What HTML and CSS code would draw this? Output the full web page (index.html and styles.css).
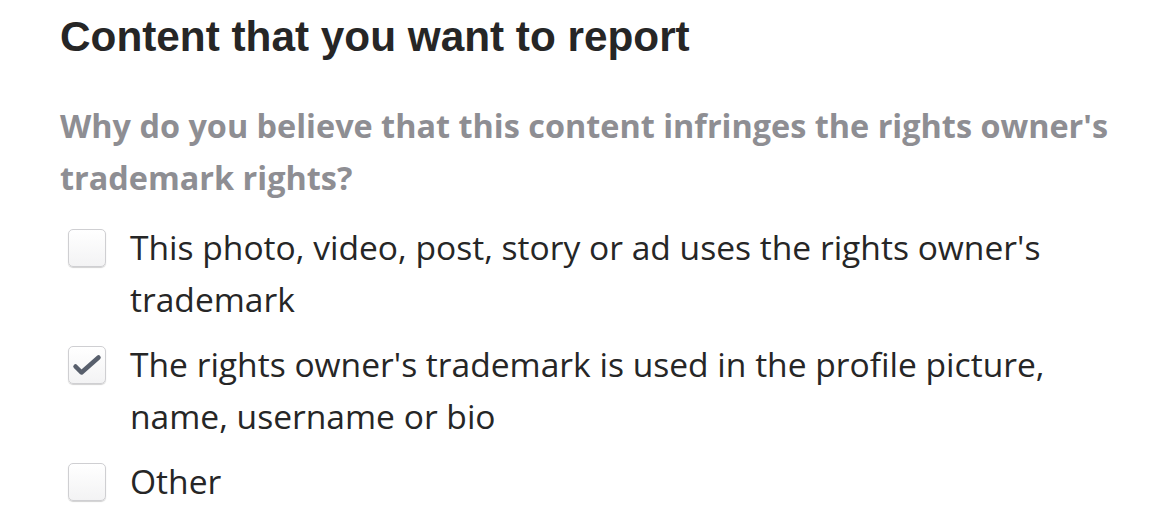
FILE: index.html
```html
<!DOCTYPE html>
<html lang="en">
<head>
    <meta charset="UTF-8">
    <meta name="viewport" content="width=device-width, initial-scale=1.0">
    <title>Report content</title>
    <link rel="stylesheet" href="styles.css">
</head>
<body>

    <div class="container">
        <h2>Content that you want to report</h2>
        <p class="question">Why do you believe that this content infringes the rights owner's trademark rights?</p>

        <ul class="options">
            <li class="option">
                <span class="box"></span>
                <span class="label">This photo, video, post, story or ad uses the rights owner's trademark</span>
            </li>
            <li class="option">
                <span class="box">
                    <svg width="38" height="38" viewBox="0 0 38 38">
                        <path d="M7.5 20.5 L13.5 26.5 L30.5 11.5" fill="none" stroke="#585f6c" stroke-width="4.5" stroke-linecap="round" stroke-linejoin="round"/>
                    </svg>
                </span>
                <span class="label">The rights owner's trademark is used in the profile picture, name, username or bio</span>
            </li>
            <li class="option">
                <span class="box"></span>
                <span class="label">Other</span>
            </li>
        </ul>
    </div>

</body>
</html>
```
FILE: styles.css
```css
body {
    margin: 0;
    background: #fff;
    font-family: "Open Sans", sans-serif;
    color: #262626;
}
.container {
    width: 1060px;
    padding: 0 50px 0 60px;
}
h2 {
    margin: 0;
    padding-top: 11px;
    font-family: "Liberation Sans", Arial, sans-serif;
    font-weight: bold;
    font-size: 42.3px;
    line-height: 52px;
    color: #262626;
}
.question {
    margin: 36px 0 0;
    font-weight: bold;
    font-size: 32.4px;
    line-height: 52px;
    color: #8e8e93;
}
.options {
    list-style: none;
    margin: 18px 0 0;
    padding: 0;
}
.option {
    display: flex;
    align-items: flex-start;
    margin-bottom: 13px;
}
.box {
    flex: none;
    box-sizing: border-box;
    width: 38px;
    height: 38px;
    margin: 8px 24px 0 8px;
    border: 1px solid #cfcfd2;
    border-radius: 5px;
    background: linear-gradient(#ffffff, #f3f3f4);
    box-shadow: 0 1px 1px rgba(0, 0, 0, 0.18);
    position: relative;
}
.box svg {
    position: absolute;
    left: -1px;
    top: -1px;
}
.label {
    font-size: 33.6px;
    line-height: 52px;
    color: #262626;
}
```
